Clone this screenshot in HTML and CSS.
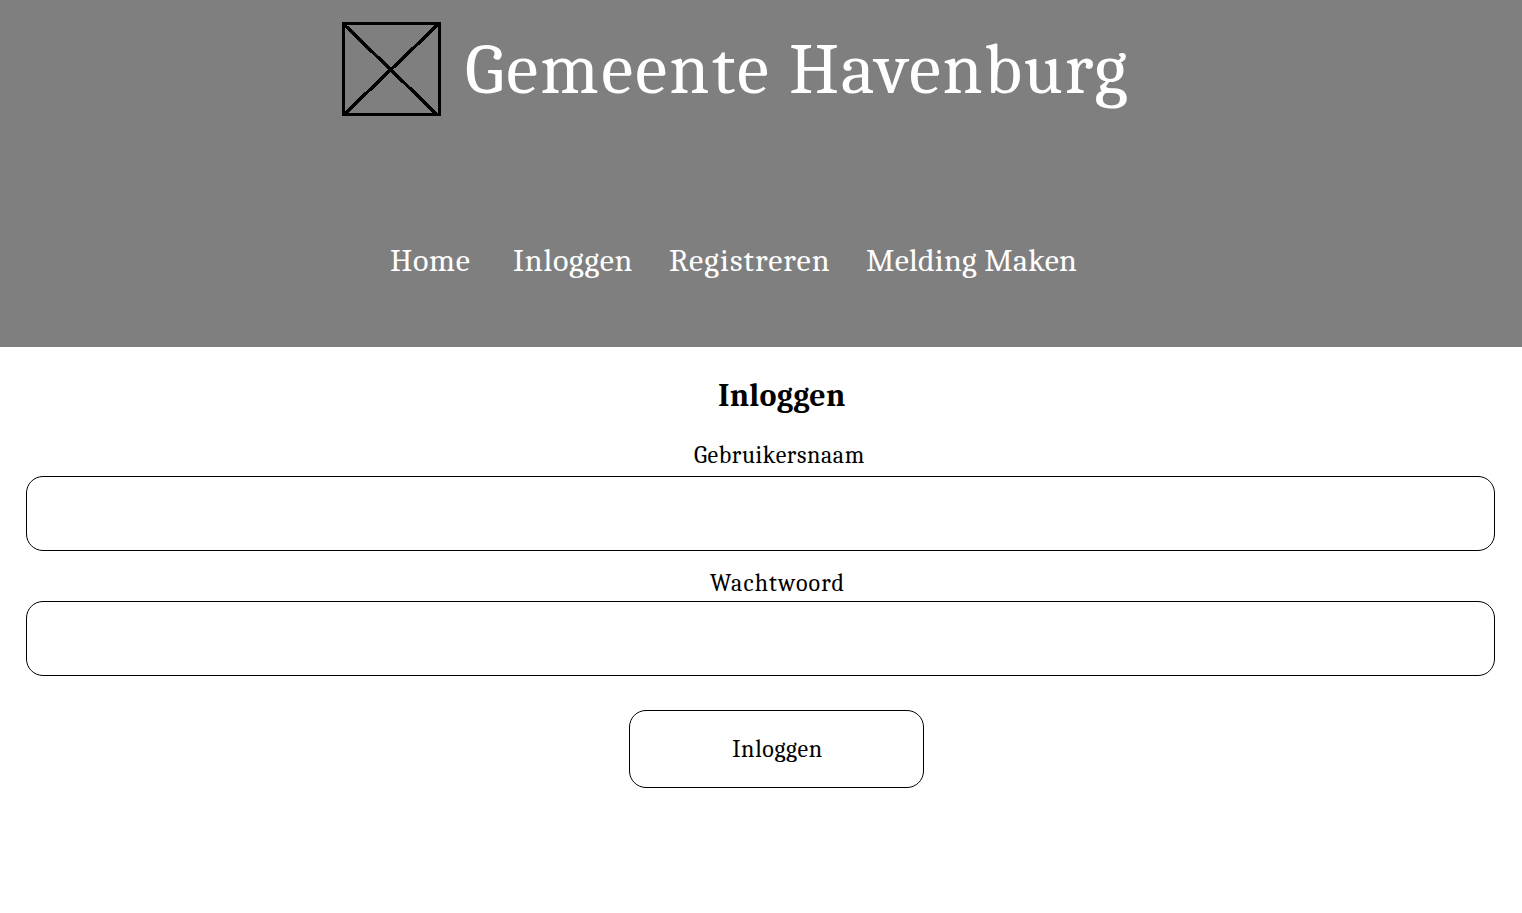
FILE: index.html
```html
<!DOCTYPE html>
<html lang="nl">
<head>
<meta charset="utf-8">
<title>Gemeente Havenburg - Inloggen</title>
<link rel="stylesheet" href="styles.css">
</head>
<body>
<header class="site-header">
  <div class="brand">
    <svg class="logo" width="99" height="94" viewBox="0 0 99 94" fill="none" stroke="#000" stroke-width="3" shape-rendering="crispEdges">
      <path d="M0 1.5H99M1.5 1V94M97.5 1V94M1 92.5H99"/>
      <path stroke-width="3.4" d="M1.5 2L95.5 93M96.5 2L2 92.5"/>
    </svg>
    <h1 class="site-title"><span class="title-type">Gemeente</span> <span class="title-name">Havenburg</span></h1>
  </div>
  <nav class="menu">
    <a class="link home">Home</a>
    <a class="link login">Inloggen</a>
    <a class="link register">Registreren</a>
    <a class="link report">Melding Maken</a>
  </nav>
</header>
<main>
  <form class="form">
    <h2 class="form-title">Inloggen</h2>
    <label class="label username" for="user">Gebruikersnaam</label>
    <input class="field" id="user" type="text">
    <label class="label password" for="pass">Wachtwoord</label>
    <input class="field" id="pass" type="password">
    <button class="submit" type="button">Inloggen</button>
  </form>
</main>
</body>
</html>
```
FILE: styles.css
```css
* { box-sizing: border-box; }
body {
  margin: 0;
  background: #fff;
  color: #000;
  font-family: Cambria, Caladea, "Liberation Serif", serif;
}
.site-header {
  height: 347px;
  padding-top: 22px;
  background: #7f7f7f;
  color: #fff;
}
.brand {
  display: flex;
  align-items: center;
  height: 94px;
  margin-left: 342px;
  gap: 24px;
}
.logo { flex: none; }
.site-title {
  margin: 0;
  padding-top: 2px;
  font-size: 72px;
  line-height: 94px;
  font-weight: 400;
  letter-spacing: 1.95px;
  white-space: nowrap;
}
.title-type { letter-spacing: 2.35px; }
.title-name { letter-spacing: 1.75px; }
.menu {
  display: flex;
  margin: 125px 0 0 390px;
}
.link {
  font-size: 32px;
  line-height: 40px;
  white-space: nowrap;
}
.home { width: 123px; letter-spacing: .7px; }
.login { width: 156px; letter-spacing: .8px; }
.register { width: 197px; letter-spacing: 1.05px; }
.report { letter-spacing: .25px; }
.form {
  display: flex;
  flex-direction: column;
  padding: 29px 27px 0 26px;
}
.form-title {
  margin: 0 0 0 692px;
  font-size: 32px;
  line-height: 40px;
  letter-spacing: .25px;
}
.label {
  font-size: 24px;
  line-height: 30px;
}
.username { margin: 24px 0 6px 668px; letter-spacing: .6px; }
.password { margin: 17px 0 3px 684px; letter-spacing: 1.1px; }
.field {
  width: 100%;
  height: 75px;
  padding: 0 20px;
  border: 1px solid #000;
  border-radius: 17px;
  background: #fff;
  font: inherit;
  font-size: 24px;
}
.submit {
  width: 295px;
  height: 78px;
  margin: 34px 0 0 603px;
  padding: 0 0 0 2px;
  border: 1px solid #000;
  border-radius: 17px;
  background: #fff;
  color: #000;
  font: inherit;
  font-size: 24px;
  letter-spacing: .65px;
}
```
